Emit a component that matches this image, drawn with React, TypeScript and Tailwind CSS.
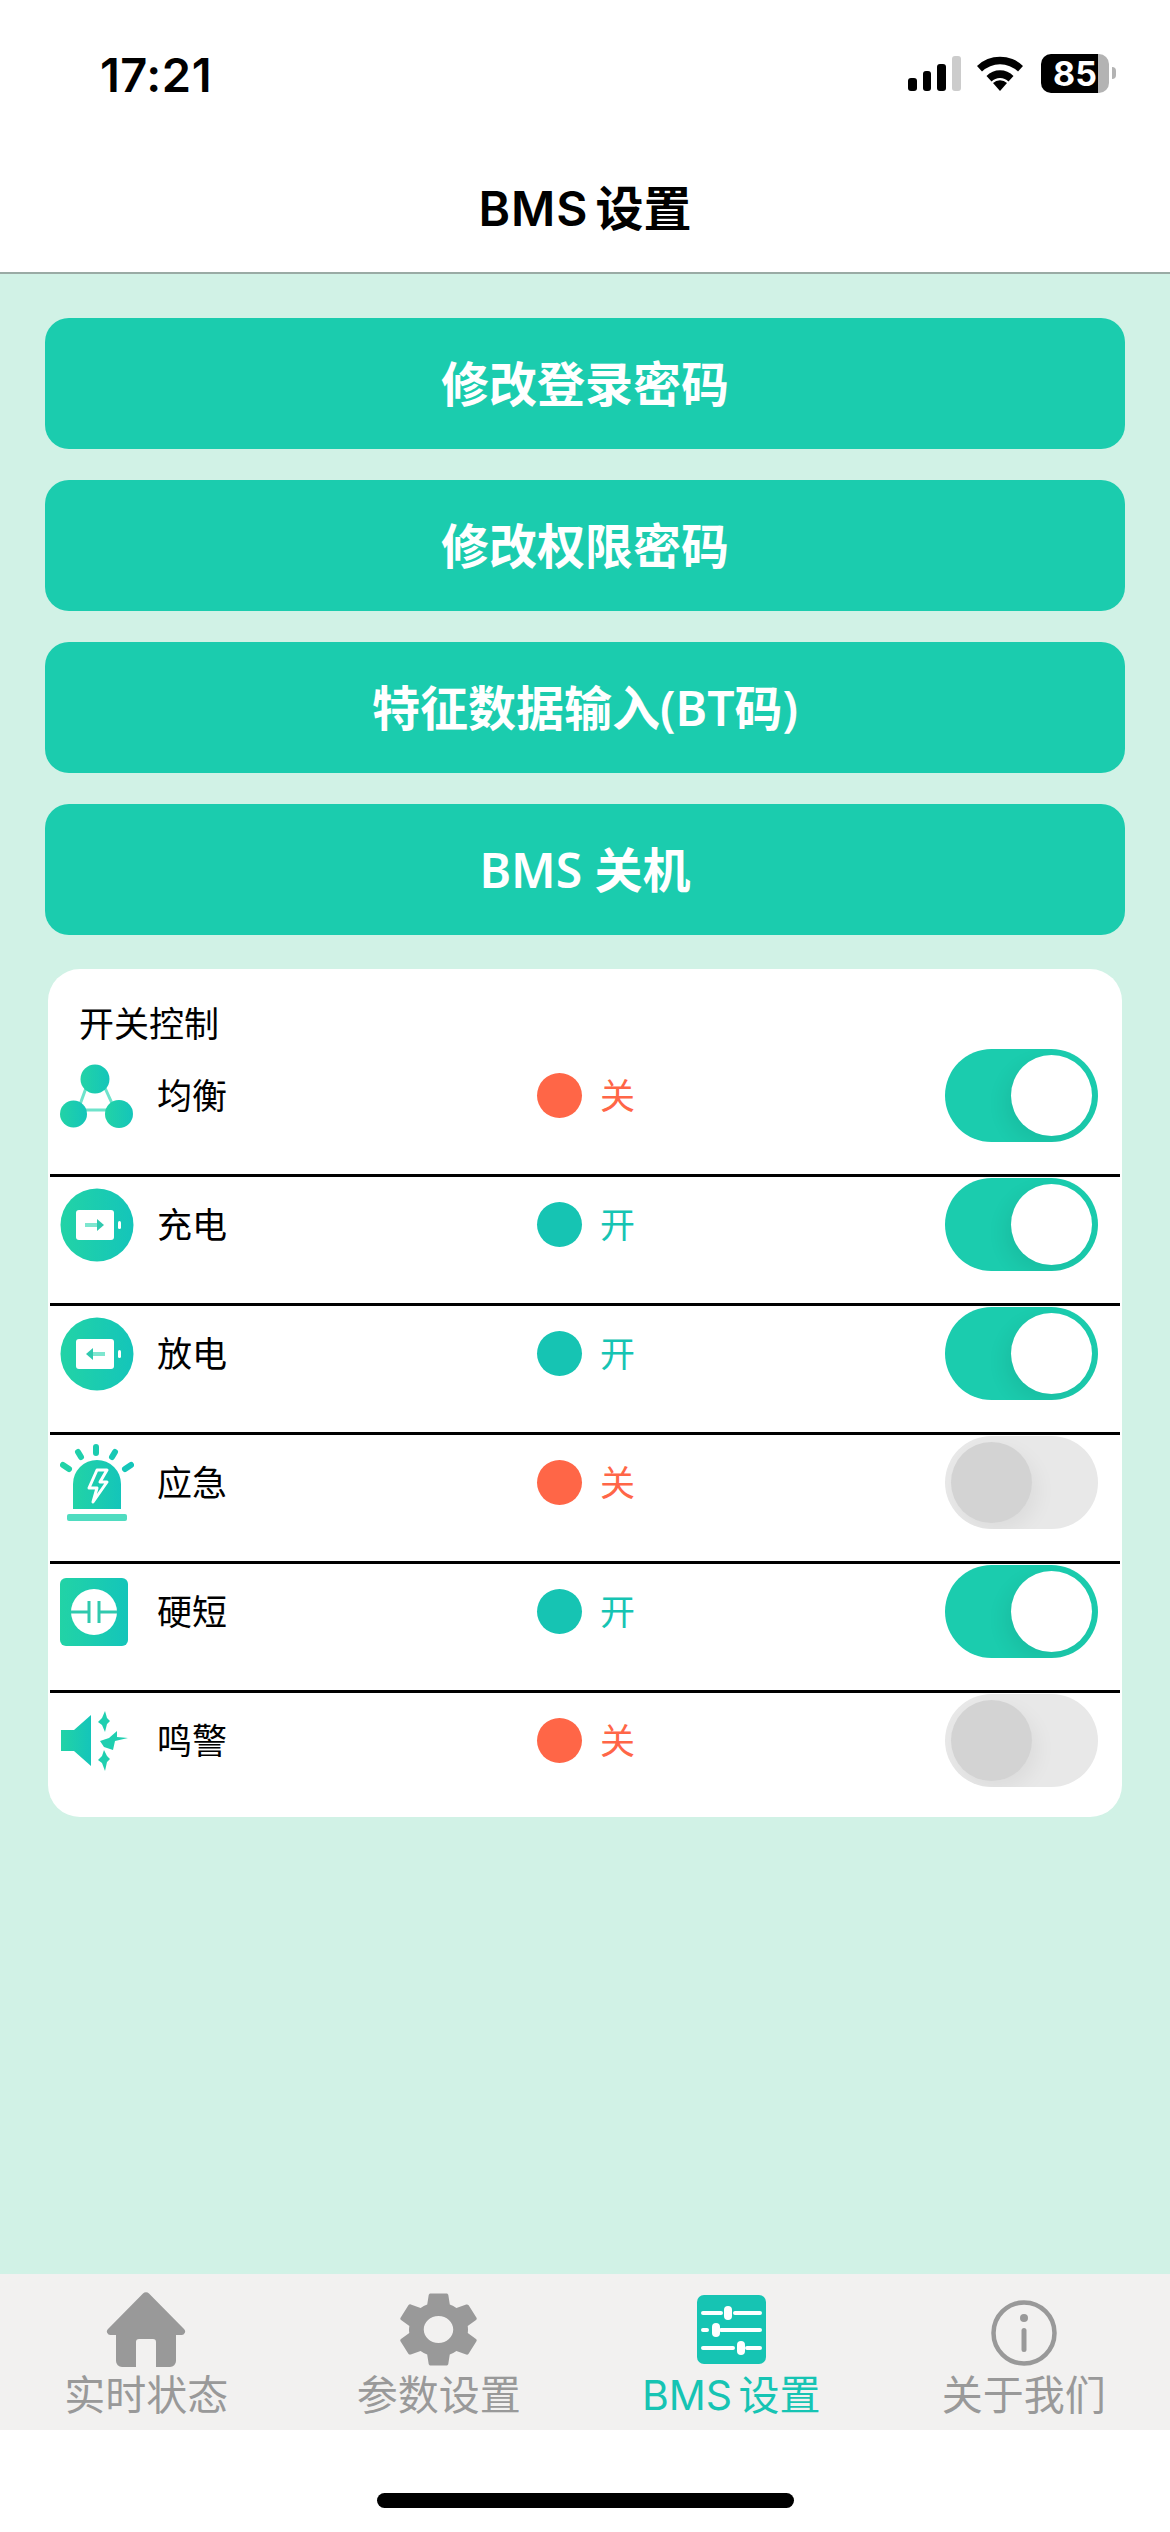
import type { ReactNode } from "react";

const rows: { label: string; on: boolean; icon: ReactNode }[] = [
  { label: "均衡", on: false, icon: <BalanceIcon /> },
  { label: "充电", on: true, icon: <BatteryIcon dir="in" /> },
  { label: "放电", on: true, icon: <BatteryIcon dir="out" /> },
  { label: "应急", on: false, icon: <SirenIcon /> },
  { label: "硬短", on: true, icon: <ShortIcon /> },
  { label: "鸣警", on: false, icon: <AlarmIcon /> },
];

// the toggles don't follow the status text in the picture
const toggles = [true, true, true, false, true, false];

const buttons = ["修改登录密码", "修改权限密码", "特征数据输入(BT码)", "BMS 关机"];

function Grad({ id }: { id: string }) {
  return (
    <defs>
      <linearGradient id={id} x1="0" y1="0" x2="1" y2="0">
        <stop offset="0" stopColor="#22d3a6" />
        <stop offset="1" stopColor="#14c5ba" />
      </linearGradient>
    </defs>
  );
}

function BalanceIcon() {
  return (
    <svg width="74" height="64" viewBox="0 0 74 64" className="blur-[0.5px]">
      <Grad id="g-balance" />
      <path d="M26 24 H45 L55 46 H18 Z" fill="none" stroke="#6fe3cb" strokeWidth="3" />
      <circle cx="35" cy="15" r="14.500" fill="url(#g-balance)" />
      <circle cx="13.500" cy="50" r="13.500" fill="url(#g-balance)" />
      <circle cx="59" cy="50" r="14" fill="url(#g-balance)" />
    </svg>
  );
}

function BatteryIcon({ dir }: { dir: "in" | "out" }) {
  const id = dir === "in" ? "g-charge" : "g-discharge";
  return (
    <svg width="74" height="74" viewBox="0 0 74 74" className="blur-[0.5px]">
      <Grad id={id} />
      <circle cx="37" cy="37" r="36.500" fill={`url(#${id})`} />
      <rect x="16" y="22" width="38" height="30" rx="3" fill="#fff" />
      <rect x="58" y="33" width="3" height="8" rx="1.500" fill="#fff" />
      {dir === "in" ? (
        <>
          <path d="M25 37 H38" stroke="#7ee6cf" strokeWidth="4" />
          <path d="M37 31 L44 37 L37 43 Z" fill="#2fc9ae" />
        </>
      ) : (
        <>
          <path d="M45 37 H32" stroke="#7ee6cf" strokeWidth="4" />
          <path d="M33 31 L26 37 L33 43 Z" fill="#2fc9ae" />
        </>
      )}
    </svg>
  );
}

function SirenIcon() {
  return (
    <svg width="74" height="78" viewBox="0 0 74 78" className="blur-[0.5px]">
      <Grad id="g-siren" />
      <path d="M13 65 V40 A24 24 0 0 1 61 40 V65 Z" fill="url(#g-siren)" />
      <rect x="7" y="70" width="60" height="7" rx="2" fill="#4fdcc0" />
      <path d="M36 3 V9 M18 8 L21 13 M55 8 L52 13 M3 21 L9 25 M71 21 L65 25" stroke="url(#g-siren)" strokeWidth="6" strokeLinecap="round" fill="none" />
      <path d="M37 26 H47 L40 38 H47 L33 58 L37 44 H29 Z" fill="none" stroke="#fff" strokeWidth="3" strokeLinejoin="round" />
    </svg>
  );
}

function ShortIcon() {
  return (
    <svg width="68" height="68" viewBox="0 0 68 68" className="blur-[0.5px]">
      <Grad id="g-short" />
      <rect width="68" height="68" rx="6" fill="url(#g-short)" />
      <circle cx="34" cy="34" r="23" fill="#fff" />
      <path d="M11 34 H29 M39 34 H57 M29 23 V45 M39 23 V45" stroke="#2fc9ae" strokeWidth="3" fill="none" />
    </svg>
  );
}

function AlarmIcon() {
  return (
    <svg width="70" height="60" viewBox="0 0 70 60" className="blur-[0.5px]">
      <Grad id="g-alarm" />
      <path d="M1 19 H14 L31 4 V55 L14 40 H1 Z" fill="url(#g-alarm)" />
      <path d="M45 0 L47 7 L50 10 L47 13 L45 21 L42 14 L38 11 L42 7 Z" fill="#1fcfb0" />
      <path d="M44 39 L47 45 L50 48 L47 51 L45 60 L42 52 L38 49 L42 45 Z" fill="#1fcfb0" />
      <path d="M68 27 L55 30 L53 39 L44 36 L40 30 L49 27 L57 20 L57 26 Z" fill="#1fcfb0" />
    </svg>
  );
}

function Toggle({ on }: { on: boolean }) {
  return (
    <div
      className={`flex h-[93px] w-[153px] items-center overflow-hidden rounded-full px-[6px] ${
        on ? "justify-end bg-[#1bccae]" : "justify-start bg-[#e8e8e8]"
      }`}
    >
      <div
        className={`h-[81px] w-[81px] rounded-full ${
          on
            ? "bg-white shadow-[-6px_8px_20px_rgba(0,0,0,0.07)]"
            : "bg-[#d3d3d3] shadow-[6px_8px_20px_rgba(0,0,0,0.05)]"
        }`}
      />
    </div>
  );
}

function Row({ label, on, toggled, icon, last }: { label: string; on: boolean; toggled: boolean; icon: ReactNode; last: boolean }) {
  return (
    <div className={`mx-[2px] pt-px ${last ? "pb-[30px]" : "border-b-[3px] border-black pb-[32px]"}`}>
      <div className="flex h-[93px] items-center pl-[10px] pr-[22px]">
        <div className="flex w-[74px] justify-start">{icon}</div>
        <div className="ml-[23px] w-[380px] text-[35px] leading-[40px] text-black">{label}</div>
        <div className={`h-[45px] w-[45px] rounded-full ${on ? "bg-[#16c4b3]" : "bg-[#ff6647]"}`} />
        <div className={`ml-[18px] text-[35px] leading-[40px] ${on ? "text-[#16c4b3]" : "text-[#ff6647]"}`}>
          {on ? "开" : "关"}
        </div>
        <div className="ml-auto">
          <Toggle on={toggled} />
        </div>
      </div>
    </div>
  );
}

function StatusIcons() {
  return (
    <div className="flex items-center">
      <div className="flex h-[36px] items-end gap-[6px]">
        <div className="h-[13px] w-[9px] rounded-[3px] bg-black" />
        <div className="h-[20px] w-[8px] rounded-[3px] bg-black" />
        <div className="h-[27px] w-[9px] rounded-[3px] bg-black" />
        <div className="h-[35px] w-[9px] rounded-[3px] bg-[#cccccc]" />
      </div>
      <svg width="48" height="36" viewBox="0 0 48 36" className="ml-[15px]">
        <path d="M1 11 A33 33 0 0 1 47 11 L42 16.500 A26 26 0 0 0 6 16.500 Z" fill="#000" />
        <path d="M10.500 21 A19 19 0 0 1 37.500 21 L32.500 26.500 A12 12 0 0 0 15.500 26.500 Z" fill="#000" />
        <path d="M17 28 A10 10 0 0 1 31 28 L24 36 Z" fill="#000" />
      </svg>
      <div className="ml-[17px] flex h-[39px] w-[68px] items-center justify-center rounded-[10px] bg-[linear-gradient(90deg,#000_84%,#b3b3b3_84%)] text-[34px] font-bold text-white">
        85
      </div>
      <div className="ml-[3px] h-[12px] w-[4px] rounded-r-full bg-[#b3b3b3]" />
    </div>
  );
}

function TabBar() {
  return (
    <nav className="grid h-[156px] grid-cols-4 bg-[#f2f1f0] pt-[18px] text-center text-[41px] leading-[42px] text-[#999999]">
      <div>
        <div className="flex h-[75px] items-center justify-center">
          <svg width="80" height="75" viewBox="0 0 80 75" className="blur-[0.5px]">
            <path
              d="M37 1.500 a4 4 0 0 1 6 0 L78 37 a3.500 3.500 0 0 1 -3 6 H70 V69 a6 6 0 0 1 -6 6 H50 V50 a3 3 0 0 0 -3 -3 H33 a3 3 0 0 0 -3 3 V75 H16 a6 6 0 0 1 -6 -6 V43 H5 a3.500 3.500 0 0 1 -3 -6 Z"
              fill="#999999"
            />
          </svg>
        </div>
        <div className="mt-[7px]">实时状态</div>
      </div>
      <div>
        <div className="flex h-[75px] items-center justify-center">
          <svg width="77" height="75" viewBox="2.600 2 18.800 20" preserveAspectRatio="none" className="blur-[0.5px]">
            <path
              d="M19.140 12.940c.04-.3.06-.61.06-.94 0-.32-.02-.64-.07-.94l2.030-1.580c.18-.14.23-.41.12-.61l-1.920-3.320c-.12-.22-.37-.29-.59-.22l-2.390.96c-.5-.38-1.030-.7-1.620-.94l-.36-2.540c-.04-.24-.24-.41-.48-.41h-3.840c-.24 0-.43.17-.47.41l-.36 2.540c-.59.24-1.130.57-1.620.94l-2.390-.96c-.22-.08-.47 0-.59.22L2.740 8.870c-.12.21-.08.47.12.61l2.030 1.580c-.05.3-.09.63-.09.94s.02.64.07.94l-2.030 1.580c-.18.14-.23.41-.12.61l1.920 3.320c.12.22.37.29.59.22l2.390-.96c.5.38 1.030.7 1.620.94l.36 2.540c.05.24.24.41.48.41h3.840c.24 0 .44-.17.47-.41l.36-2.540c.59-.24 1.130-.56 1.620-.94l2.390.96c.22.08.47 0 .59-.22l1.920-3.320c.12-.22.07-.47-.12-.61l-2.010-1.580zM12 15.600c-1.980 0-3.600-1.620-3.600-3.600s1.620-3.600 3.600-3.600 3.600 1.620 3.600 3.600-1.620 3.600-3.600 3.600z"
              fill="#999999"
            />
          </svg>
        </div>
        <div className="mt-[7px]">参数设置</div>
      </div>
      <div className="text-[#16c4b3]">
        <div className="flex h-[75px] items-center justify-center">
          <svg width="69" height="69" viewBox="0 0 69 69" className="blur-[0.5px]">
            <rect width="69" height="69" rx="7" fill="#16c4b3" />
            <path d="M6 18 H24 M38 18 H63 M6 35 H10 M24 35 H63 M6 53 H36 M50 53 H63" stroke="#fff" strokeWidth="4" strokeLinecap="round" />
            <rect x="27" y="11" width="8" height="14" rx="4" fill="#fff" />
            <rect x="15" y="28" width="8" height="14" rx="4" fill="#fff" />
            <rect x="40" y="46" width="8" height="14" rx="4" fill="#fff" />
          </svg>
        </div>
        <div className="mt-[7px] [word-spacing:-5px]">BMS 设置</div>
      </div>
      <div>
        <div className="flex h-[75px] items-start justify-center pt-[8px]">
          <svg width="66" height="66" viewBox="0 0 66 66" className="blur-[0.5px]">
            <circle cx="33" cy="33" r="30.500" fill="none" stroke="#999999" strokeWidth="4.500" />
            <circle cx="33" cy="18" r="4" fill="#999999" />
            <rect x="30.500" y="28" width="5" height="24" rx="2.500" fill="#999999" />
          </svg>
        </div>
        <div className="mt-[7px]">关于我们</div>
      </div>
    </nav>
  );
}

export default function App() {
  return (
    <div className="flex h-[2532px] w-[1170px] flex-col bg-white font-['Inter','Noto_Sans_CJK_SC',sans-serif] text-black">
      <header className="border-b-2 border-[#9aaba5] bg-white">
        <div className="flex h-[146px] items-center justify-between pl-[100px] pr-[54px]">
          <span className="pt-[3px] text-[47px] font-semibold leading-none tracking-[0.5px]">17:21</span>
          <StatusIcons />
        </div>
        <div className="flex h-[126px] items-center justify-center text-[48px] font-semibold leading-none [word-spacing:-5px]">
          <span>
            <span className="tracking-[1px]">BMS</span> 设置
          </span>
        </div>
      </header>

      <main className="flex-1 bg-[#d1f2e6] px-[45px] pt-[44px]">
        <div className="flex flex-col gap-[31px]">
          {buttons.map((b) => (
            <button
              key={b}
              className="h-[131px] rounded-[24px] bg-[#1bccae] font-['Noto_Sans','Noto_Sans_CJK_SC',sans-serif] text-[48px] font-semibold text-white"
            >
              {b}
            </button>
          ))}
        </div>

        <section className="mx-[3px] mt-[34px] rounded-[32px] bg-white">
          <div className="pb-[4px] pl-[31px] pt-[35px] text-[35px] leading-[40px]">开关控制</div>
          {rows.map((r, i) => (
            <Row key={r.label} label={r.label} on={r.on} toggled={toggles[i]} icon={r.icon} last={i === rows.length - 1} />
          ))}
        </section>
      </main>

      <TabBar />

      <div className="flex h-[102px] items-start justify-center bg-white pt-[63px]">
        <div className="h-[15px] w-[417px] rounded-full bg-black" />
      </div>
    </div>
  );
}
